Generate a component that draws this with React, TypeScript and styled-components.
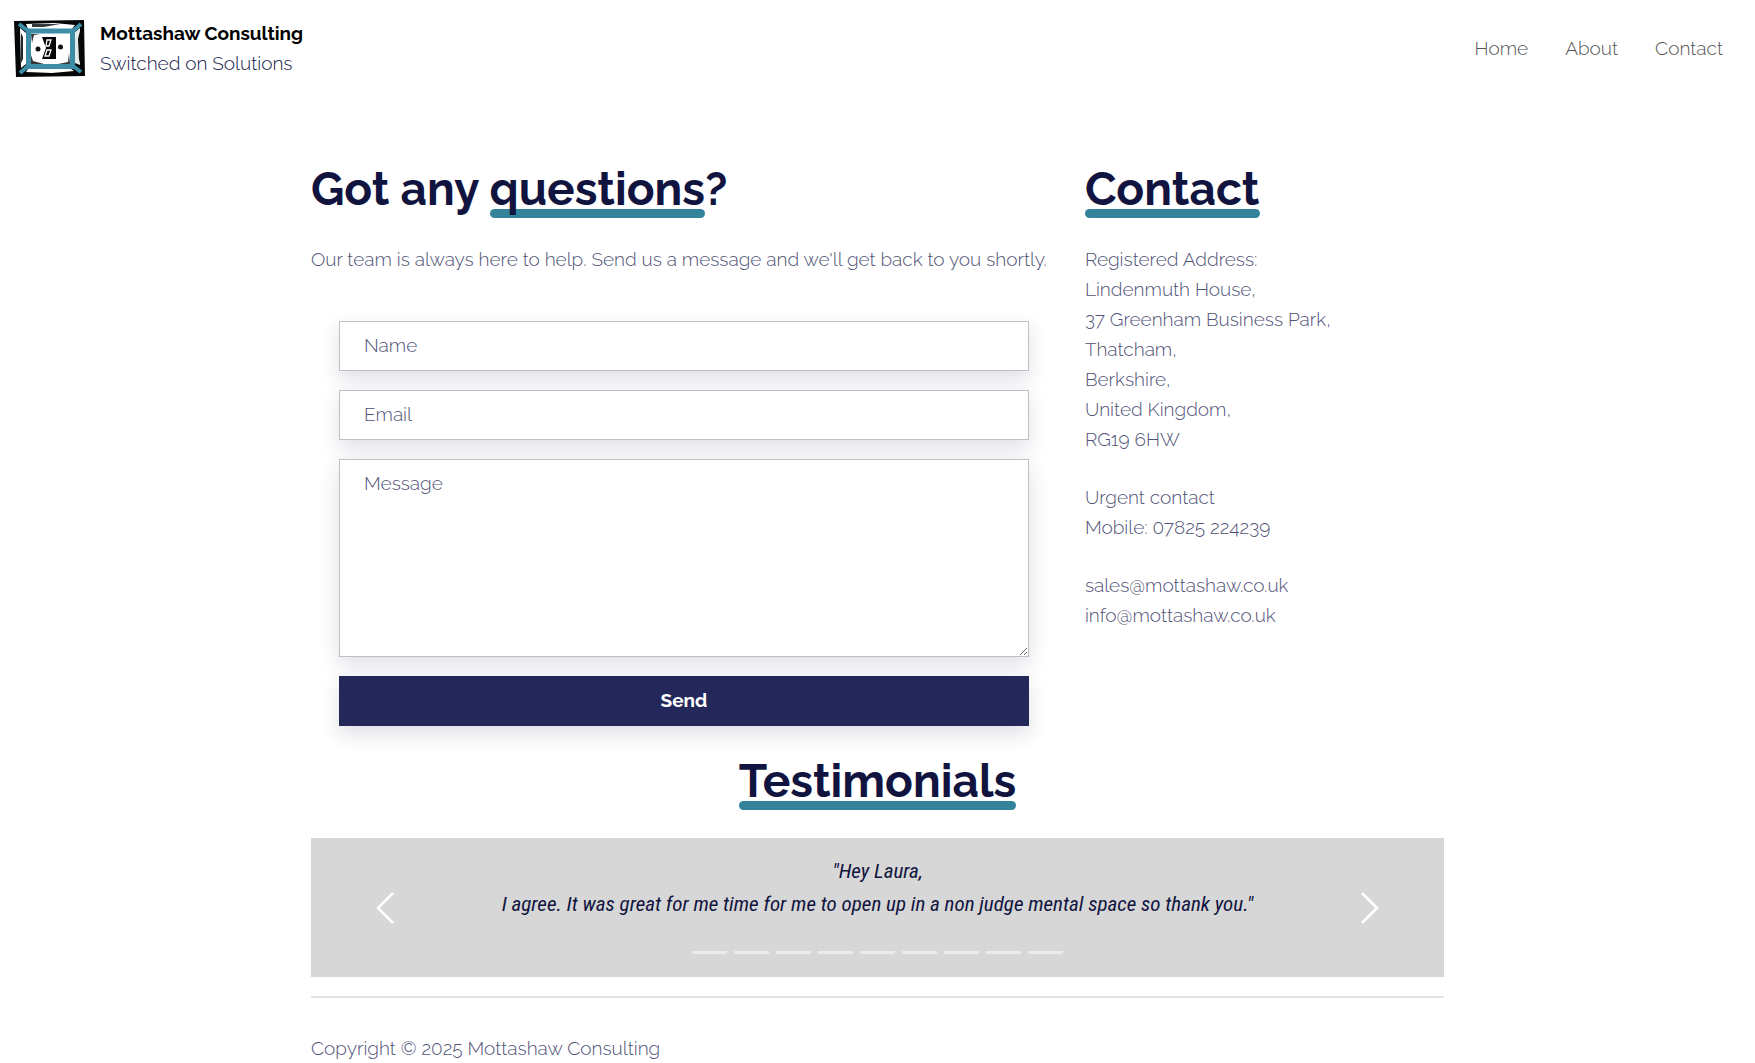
import React from "react";
import styled, { createGlobalStyle } from "styled-components";

const GlobalStyle = createGlobalStyle`
  *, *::before, *::after { box-sizing: border-box; }
  body {
    margin: 0;
    background: #fff;
    color: #4f5376;
    font-family: Raleway, Lato, "Open Sans", sans-serif;
    font-size: 19px;
    font-weight: 300;
    line-height: 30px;
  }
`;

const Header = styled.header`
  display: flex;
  align-items: center;
  justify-content: space-between;
  padding: 18px 32px 18px 14px;
`;

const Brand = styled.a`
  display: flex;
  align-items: center;
  gap: 15px;
  color: #14174a;
  text-decoration: none;
`;

const BrandName = styled.strong`
  display: block;
  color: #000;
  font-weight: 700;
`;

const Nav = styled.nav`
  display: flex;
  gap: 37px;
`;

const NavLink = styled.a`
  color: #555;
  text-decoration: none;
`;

const Container = styled.div`
  width: 100%;
  max-width: 1133px;
  margin: 0 auto;
`;

const Columns = styled.main`
  display: grid;
  grid-template-columns: 27fr 13fr;
  column-gap: 28px;
  padding-top: 64px;
`;

const Heading = styled.h2<{ $centered?: boolean }>`
  isolation: isolate;
  margin: 0;
  color: #11143f;
  font-size: 46px;
  font-weight: 700;
  line-height: 58px;
  text-align: ${(p) => (p.$centered ? "center" : "left")};
`;

const Underlined = styled.span`
  position: relative;
  display: inline-block;

  &::after {
    content: "";
    position: absolute;
    z-index: -1;
    left: 0;
    right: 0;
    bottom: 0;
    height: 9px;
    border-radius: 5px;
    background: #33839b;
  }
`;

const Text = styled.p`
  margin: 26px 0 0;
`;

const Address = styled.address`
  margin-top: 26px;
  font-style: normal;
`;

const AddressBlock = styled.p`
  margin: 0 0 28px;
  white-space: pre-line;
`;

const Form = styled.form`
  display: flex;
  flex-direction: column;
  gap: 19px;
  margin: 47px 28px 26px;
`;

const shadow = "0 8px 20px rgba(36, 39, 90, 0.15)";

const Field = styled.input`
  width: 100%;
  height: 50px;
  padding: 8px 24px 10px;
  border: 1px solid #bfc0c6;
  border-radius: 0;
  background: #fff;
  box-shadow: ${shadow};
  color: #4f5376;
  font: inherit;

  &::placeholder { color: #4f5376; opacity: 1; }
`;

const MessageField = styled(Field)`
  display: block;
  height: 198px;
  resize: vertical;
`;

const SendButton = styled.button`
  height: 50px;
  padding: 0 24px 2px;
  border: 0;
  background: #24275a;
  box-shadow: ${shadow};
  color: #fff;
  font: inherit;
  font-weight: 700;
  cursor: pointer;
`;

const Carousel = styled.section`
  display: grid;
  grid-template-columns: 148px 1fr 148px;
  margin-top: 28px;
  background: #d7d7d7;
`;

const Slide = styled.div`
  display: flex;
  flex-direction: column;
  align-items: center;
  padding: 17px 0 23px;
`;

const Quote = styled.blockquote`
  margin: 0 0 30px;
  color: #11143f;
  font-family: "Roboto Condensed", "Liberation Sans Narrow", Roboto, sans-serif;
  font-size: 21px;
  font-style: italic;
  font-weight: 400;
  line-height: 33px;
  text-align: center;
  white-space: pre-line;
`;

const Arrow = styled.button`
  display: flex;
  align-items: center;
  justify-content: center;
  padding: 0;
  border: 0;
  background: none;
  cursor: pointer;
`;

const Indicators = styled.div`
  display: flex;
  gap: 7px;
`;

const Indicator = styled.button`
  width: 35px;
  height: 3px;
  padding: 0;
  border: 0;
  background: #ebebeb;
  cursor: pointer;
`;

const Footer = styled.footer`
  margin-top: 19px;
  padding-top: 35px;
  border-top: 2px solid #e4e4e4;
`;

function Logo() {
  return (
    <svg width="71" height="58" viewBox="0 0 71 58" aria-hidden="true">
      <polygon points="0,2 70,1 71,57 2,58" fill="#050607" />
      <path d="M12 5 40 4 61 6 58 10 14 10Z" fill="#fff" />
      <path d="M18 5H46L30 8H18Z" fill="#33383b" />
      <path d="M6 9 12 14 12 45 7 49Z" fill="#fff" />
      <path d="M7 14 9 18 9 40 7 44Z" fill="#22272a" />
      <path d="M14 50 57 50 60 52 38 54 12 53Z" fill="#fff" />
      <path d="M61 13 66 9 66 46 61 44Z" fill="#e4e9eb" />
      <path d="M64 20 66 12 67 48 65 40Z" fill="#090b0c" />
      <path d="M5 5 14 12M67 5 59 12M6 54 14 47M67 53 59 47" stroke="#3d8da6" strokeWidth="4" />
      <rect x="14.500" y="12" width="44" height="35.500" fill="#fff" stroke="#3d8da6" strokeWidth="5" />
      <path d="M17 15H26L20 16 18 24Z M17 45V36L19 42 30 45Z M56 45H44L54 43 55 34Z" fill="#34383b" />
      <path d="M28 18 42 18 42 40 28 40 32 29Z" fill="#050607" />
      <path d="M33 21H37L35 27H32Z M33 31H37L35 37H31Z" fill="none" stroke="#fff" strokeWidth="1.300" />
      <circle cx="24" cy="30" r="2.500" fill="#111" />
      <circle cx="46.500" cy="28" r="2.500" fill="#111" />
    </svg>
  );
}

function Chevron({ direction }: { direction: "left" | "right" }) {
  return (
    <svg width="18" height="32" viewBox="0 0 18 32" fill="none" stroke="#fff" strokeWidth="2.500" aria-hidden="true">
      <path d={direction === "left" ? "M17 1 2 16 17 31" : "M1 1 16 16 1 31"} />
    </svg>
  );
}

const address = `Registered Address:
Lindenmuth House,
37 Greenham Business Park,
Thatcham,
Berkshire,
United Kingdom,
RG19 6HW`;

const quote = `"Hey Laura,
I agree. It was great for me time for me to open up in a non judge mental space so thank you."`;

const slides = Array.from({ length: 9 }, (_, i) => i + 1);

export default function App() {
  return (
    <>
      <GlobalStyle />
      <Header>
        <Brand href="#">
          <Logo />
          <span>
            <BrandName>Mottashaw Consulting</BrandName>
            Switched on Solutions
          </span>
        </Brand>
        <Nav>
          <NavLink href="#home">Home</NavLink>
          <NavLink href="#about">About</NavLink>
          <NavLink href="#contact">Contact</NavLink>
        </Nav>
      </Header>
      <Container>
        <Columns>
          <section>
            <Heading>
              Got any <Underlined>questions</Underlined>?
            </Heading>
            <Text>Our team is always here to help. Send us a message and we'll get back to you shortly.</Text>
            <Form onSubmit={(e) => e.preventDefault()}>
              <Field type="text" placeholder="Name" aria-label="Name" />
              <Field type="email" placeholder="Email" aria-label="Email" />
              <MessageField as="textarea" placeholder="Message" aria-label="Message" />
              <SendButton type="submit">Send</SendButton>
            </Form>
          </section>
          <section id="contact">
            <Heading>
              <Underlined>Contact</Underlined>
            </Heading>
            <Address>
              <AddressBlock>{address}</AddressBlock>
              <AddressBlock>{"Urgent contact\nMobile: 07825 224239"}</AddressBlock>
              <AddressBlock>{"sales@mottashaw.co.uk\ninfo@mottashaw.co.uk"}</AddressBlock>
            </Address>
          </section>
        </Columns>
        <Heading $centered>
          <Underlined>Testimonials</Underlined>
        </Heading>
        <Carousel aria-label="Testimonials">
          <Arrow type="button" aria-label="Previous">
            <Chevron direction="left" />
          </Arrow>
          <Slide>
            <Quote>{quote}</Quote>
            <Indicators>
              {slides.map((n) => (
                <Indicator key={n} type="button" aria-label={`Slide ${n}`} />
              ))}
            </Indicators>
          </Slide>
          <Arrow type="button" aria-label="Next">
            <Chevron direction="right" />
          </Arrow>
        </Carousel>
        <Footer>Copyright © 2025 Mottashaw Consulting</Footer>
      </Container>
    </>
  );
}
